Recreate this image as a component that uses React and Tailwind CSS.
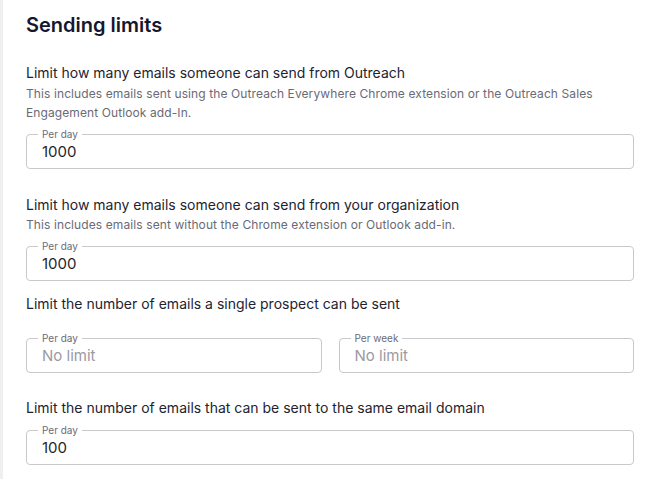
import React from "react";

function Field({ label, value, muted, className = "" }) {
  return (
    <fieldset
      className={`border border-[#c9c9cc] rounded-[4px] pl-[11px] pr-2 h-[41px] -mt-[6px] ${className}`}
    >
      <legend className="px-[4px] text-[10px] leading-[12px] text-[#6b6b78]">{label}</legend>
      <div
        className={`pl-[4px] pt-[3px] text-[15px] leading-[18px] ${muted ? "text-[#9a9aa3]" : "text-[#1f1f2e]"}`}
      >
        {value}
      </div>
    </fieldset>
  );
}

export default function App() {
  return (
    <div
      className="w-[647px] h-[479px] bg-white flex overflow-hidden"
      style={{ fontFamily: "Inter, 'Noto Sans', sans-serif" }}
    >
      <div className="w-[3px] bg-[#efeff1] shrink-0" />
      <div className="flex-1 pl-[23px] pr-[13px]">
        <h1 className="text-[20px] leading-[26px] font-semibold text-[#17172b] mt-[12px]">
          Sending limits
        </h1>

        <div className="mt-[25px] text-[14px] leading-[20px] text-[#23232f]">
          Limit how many emails someone can send from Outreach
        </div>
        <div className="mt-[1px] text-[12px] leading-[19px] tracking-[0.1px] text-[#6a6a76]">
          This includes emails sent using the Outreach Everywhere Chrome extension or the Outreach Sales Engagement Outlook add-In.
        </div>
        <Field label="Per day" value="1000" className="mt-[6px]" />

        <div className="mt-[26px] text-[14px] leading-[20px] text-[#23232f]">
          Limit how many emails someone can send from your organization
        </div>
        <div className="text-[12px] leading-[19px] tracking-[0.1px] text-[#6a6a76]">
          This includes emails sent without the Chrome extension or Outlook add-in.
        </div>
        <Field label="Per day" value="1000" className="mt-[6px]" />

        <div className="mt-[13px] text-[14px] leading-[20px] text-[#23232f]">
          Limit the number of emails a single prospect can be sent
        </div>
        <div className="flex gap-[17px] mt-[24px]">
          <Field label="Per day" value="No limit" muted className="flex-1" />
          <Field label="Per week" value="No limit" muted className="flex-1" />
        </div>

        <div className="mt-[25px] text-[14px] leading-[20px] text-[#23232f]">
          Limit the number of emails that can be sent to the same email domain
        </div>
        <Field label="Per day" value="100" className="mt-[6px]" />
      </div>
    </div>
  );
}
